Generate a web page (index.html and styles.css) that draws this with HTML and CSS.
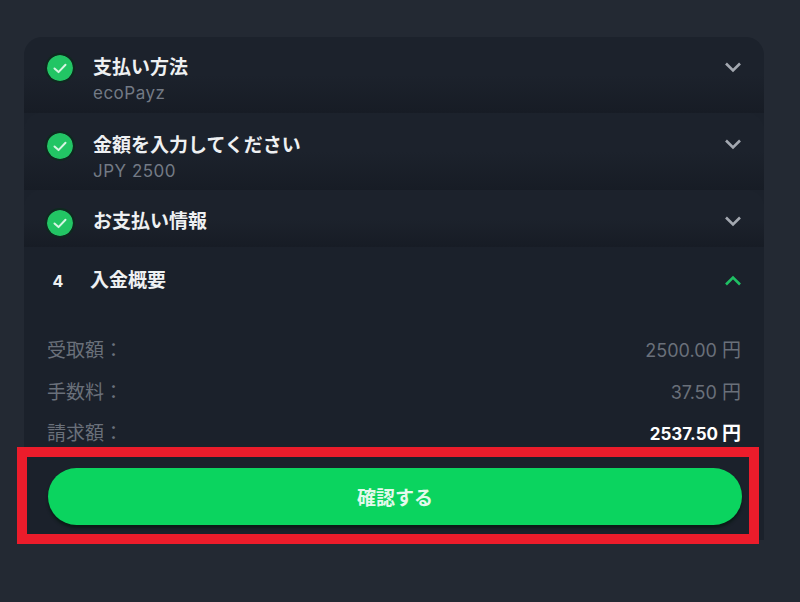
FILE: index.html
```html
<!DOCTYPE html>
<html lang="ja">
<head>
<meta charset="utf-8">
<title>入金概要</title>
<link rel="stylesheet" href="styles.css">
</head>
<body>
<main class="page">
  <section class="card">
    <div class="step step-first">
      <svg class="check" viewBox="0 0 26 26"><circle cx="13" cy="13" r="13" fill="#22c564"/><path d="M7.5 13.5l4 3.6 7-7.4" fill="none" stroke="#d5f5e2" stroke-width="2" stroke-linecap="round" stroke-linejoin="round"/></svg>
      <div class="step-text">
        <div class="step-title">支払い方法</div>
        <div class="step-sub">ecoPayz</div>
      </div>
      <svg class="chev" viewBox="0 0 18 12"><path d="M2 2.5l7 7 7-7" fill="none" stroke="#a3a8b0" stroke-width="2.6"/></svg>
    </div>
    <div class="step step-tall">
      <svg class="check" viewBox="0 0 26 26"><circle cx="13" cy="13" r="13" fill="#22c564"/><path d="M7.5 13.5l4 3.6 7-7.4" fill="none" stroke="#d5f5e2" stroke-width="2" stroke-linecap="round" stroke-linejoin="round"/></svg>
      <div class="step-text">
        <div class="step-title">金額を入力してください</div>
        <div class="step-sub">JPY 2500</div>
      </div>
      <svg class="chev" viewBox="0 0 18 12"><path d="M2 2.5l7 7 7-7" fill="none" stroke="#a3a8b0" stroke-width="2.6"/></svg>
    </div>
    <div class="step step-short">
      <svg class="check" viewBox="0 0 26 26"><circle cx="13" cy="13" r="13" fill="#22c564"/><path d="M7.5 13.5l4 3.6 7-7.4" fill="none" stroke="#d5f5e2" stroke-width="2" stroke-linecap="round" stroke-linejoin="round"/></svg>
      <div class="step-text">
        <div class="step-title">お支払い情報</div>
      </div>
      <svg class="chev" viewBox="0 0 18 12"><path d="M2 2.5l7 7 7-7" fill="none" stroke="#a3a8b0" stroke-width="2.6"/></svg>
    </div>
    <div class="step-open">
      <div class="open-head">
        <span class="num">4</span>
        <div class="step-title">入金概要</div>
        <svg class="chev chev-open" viewBox="0 0 18 12"><path d="M2 9.5l7-7 7 7" fill="none" stroke="#1fc064" stroke-width="2.6"/></svg>
      </div>
      <dl class="rows">
        <div class="row"><dt>受取額：</dt><dd>2500.00 <span class="unit">円</span></dd></div>
        <div class="row"><dt>手数料：</dt><dd>37.50 <span class="unit">円</span></dd></div>
        <div class="row"><dt>請求額：</dt><dd class="total">2537.50 <span class="unit">円</span></dd></div>
      </dl>
      <button class="confirm" type="button">確認する</button>
    </div>
    <div class="highlight"></div>
  </section>
</main>
</body>
</html>
```
FILE: styles.css
```css
* { box-sizing: border-box; }
html, body { margin: 0; height: 100%; }
body {
  background: #232933;
  font-family: "Inter", "Noto Sans CJK JP", sans-serif;
  overflow: hidden;
}
.page { padding: 37px 36px 0 24px; }
.card {
  position: relative;
  width: 740px;
  height: 503px;
  background: #1b212b;
  border-radius: 20px 20px 0 0;
}
.step {
  display: flex;
  align-items: flex-start;
  padding: 20px 22px 0 23px;
  background: linear-gradient(#1c222c 50%, #171c25);
  border-radius: 18px 18px 0 0;
}
.step-first { height: 76px; padding-top: 18px; }
.step-tall { height: 77px; }
.step-short { height: 57px; }
.check {
  width: 26px;
  height: 26px;
  flex: none;
  margin-right: 20px;
  border-radius: 50%;
  box-shadow: 0 0 0 2px #0e2a1f;
}
.step-text { flex: 1; }
.step-title {
  color: #eef0f2;
  font-size: 19px;
  font-weight: 700;
  line-height: 24px;
  margin-top: 1px;
}
.open-head .step-title { margin-top: 0; }
.step-short .step-title { margin-top: 0; }
.step-sub {
  color: #737a85;
  font-size: 17px;
  letter-spacing: 0.5px;
  line-height: 24px;
  margin-top: 1px;
}
.chev { width: 18px; height: 12px; flex: none; margin-top: 5px; }
.step-first .chev { margin-top: 6px; }
.chev-open { margin-top: 0; }
.step-open { padding: 0 22px 0 23px; }
.open-head {
  display: flex;
  align-items: center;
  height: 68px;
}
.num {
  width: 22px;
  text-align: center;
  color: #eef0f2;
  font-size: 16px;
  font-weight: 700;
  margin-right: 21px;
}
.open-head .step-title { flex: 1; }
.rows { margin: 15px 0 0; }
.row {
  display: flex;
  justify-content: space-between;
  height: 41.5px;
  line-height: 41.5px;
  font-size: 19px;
  color: #6a707a;
}
.row dt { margin: 0; }
.row dd { margin: 0 1px 0 0; font-size: 18px; }
.unit { font-size: 19px; }
.row .total { color: #fff; font-weight: 700; font-size: 17px; }
.row .total .unit { font-size: 19px; }
.confirm {
  display: block;
  width: 694px;
  height: 57px;
  margin: 13.5px 0 0 1px;
  border: 0;
  border-radius: 29px;
  background: #0bd45f;
  box-shadow: 0 3px 3px #0b1a17;
  color: #e3f9ec;
  font: 700 19px "Inter", "Noto Sans CJK JP", sans-serif;
}
.highlight {
  position: absolute;
  left: -7px;
  top: 410px;
  width: 742px;
  height: 97px;
  border: 10px solid #ec1c2b;
  pointer-events: none;
}
```
